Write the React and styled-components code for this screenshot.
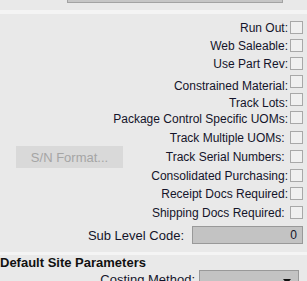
import React from "react";
import styled, { createGlobalStyle } from "styled-components";

const Global = createGlobalStyle`
  html, body {
    margin: 0;
    padding: 0;
    background: #e9e9e9;
    overflow: hidden;
  }
  body {
    font-family: "Liberation Sans", Arial, sans-serif;
    color: #14142a;
  }
`;

const Page = styled.div`
  width: 307px;
  height: 281px;
  overflow: hidden;
  display: flex;
  flex-direction: column;

  & > * {
    flex: none;
  }
`;

const TopField = styled.div`
  box-sizing: border-box;
  margin: -15px 0 0 67px;
  width: 216px;
  height: 18px;
  background: #c6c6c6;
  border: 1px solid #a3a3a3;
`;

const Divider = styled.div`
  height: ${(p) => p.$h || 4}px;
  margin-top: ${(p) => p.$top}px;
  background: #f4f4f4;
`;

const Checks = styled.div`
  display: flex;
  flex-direction: column;
  padding: 7px 4px 0 0;
`;

const Row = styled.div`
  display: flex;
  align-items: flex-start;
  justify-content: flex-end;
  height: ${(p) => p.$h}px;
  flex: none;
`;

const Label = styled.span`
  font-size: 12px;
  line-height: 14px;
  white-space: pre;
  margin: ${(p) => p.$drop || 0}px 2px 0 0;
`;

const Box = styled.span`
  box-sizing: border-box;
  width: 13px;
  height: 13px;
  flex: none;
  background: #f0f0f0;
  border: 1px solid #a8a8a8;
`;

const Button = styled.button`
  box-sizing: border-box;
  margin: -4px auto 0 16px;
  width: 107px;
  height: 22px;
  border: none;
  padding: 0;
  background: #d9d9d9;
  color: #a5a5a5;
  font-family: "Liberation Sans", Arial, sans-serif;
  font-size: 13px;
`;

const FieldRow = styled.div`
  display: flex;
  align-items: center;
  justify-content: flex-end;
  padding-right: ${(p) => p.$pr}px;
  margin-top: ${(p) => p.$top || 0}px;
`;

const FieldLabel = styled.span`
  font-size: 13px;
  margin-right: ${(p) => p.$gap}px;
`;

const Input = styled.div`
  box-sizing: border-box;
  width: ${(p) => p.$w}px;
  height: 18px;
  background: #c3c3c3;
  border: 1px solid #999;
  font-size: 12px;
  line-height: 16px;
  text-align: right;
  padding-right: 5px;
  position: relative;
`;

const Arrow = styled.span`
  position: absolute;
  right: 7px;
  top: 8px;
  width: 0;
  height: 0;
  border-left: 4px solid transparent;
  border-right: 4px solid transparent;
  border-top: 5px solid #111;
`;

const Heading = styled.div`
  font-size: 13px;
  font-weight: bold;
  line-height: 15px;
  color: #111;
`;

const checks = [
  { label: "Run Out:", h: 18 },
  { label: "Web Saleable:", h: 18 },
  { label: "Use Part Rev:", h: 18 },
  { label: "Constrained Material:", h: 18, drop: 4 },
  { label: "Track Lots:", h: 18, drop: 3 },
  { label: "Package Control Specific UOMs:", h: 20, drop: 1 },
  { label: "Track Multiple UOMs:\u00a0", h: 19 },
  { label: "Track Serial Numbers:\u00a0", h: 19, button: true },
  { label: "Consolidated Purchasing:", h: 18 },
  { label: "Receipt Docs Required:", h: 19 },
  { label: "Shipping Docs Required:\u00a0", h: 20 },
];

export default function App() {
  return (
    <Page>
      <Global />
      <TopField />
      <Divider $top={7} />
      <Checks>
        {checks.map((c) => (
          <Row key={c.label} $h={c.h}>
            {c.button && <Button disabled>S/N Format...</Button>}
            <Label $drop={c.drop}>{c.label}</Label>
            <Box />
          </Row>
        ))}
      </Checks>
      <FieldRow $pr={4}>
        <FieldLabel $gap={8}>Sub Level Code:</FieldLabel>
        <Input $w={111}>0</Input>
      </FieldRow>
      <Divider $top={8} $h={3} />
      <Heading>Default Site Parameters</Heading>
      <FieldRow $pr={8}>
        <FieldLabel $gap={4}>Costing Method:</FieldLabel>
        <Input $w={100}>
          <Arrow />
        </Input>
      </FieldRow>
    </Page>
  );
}
